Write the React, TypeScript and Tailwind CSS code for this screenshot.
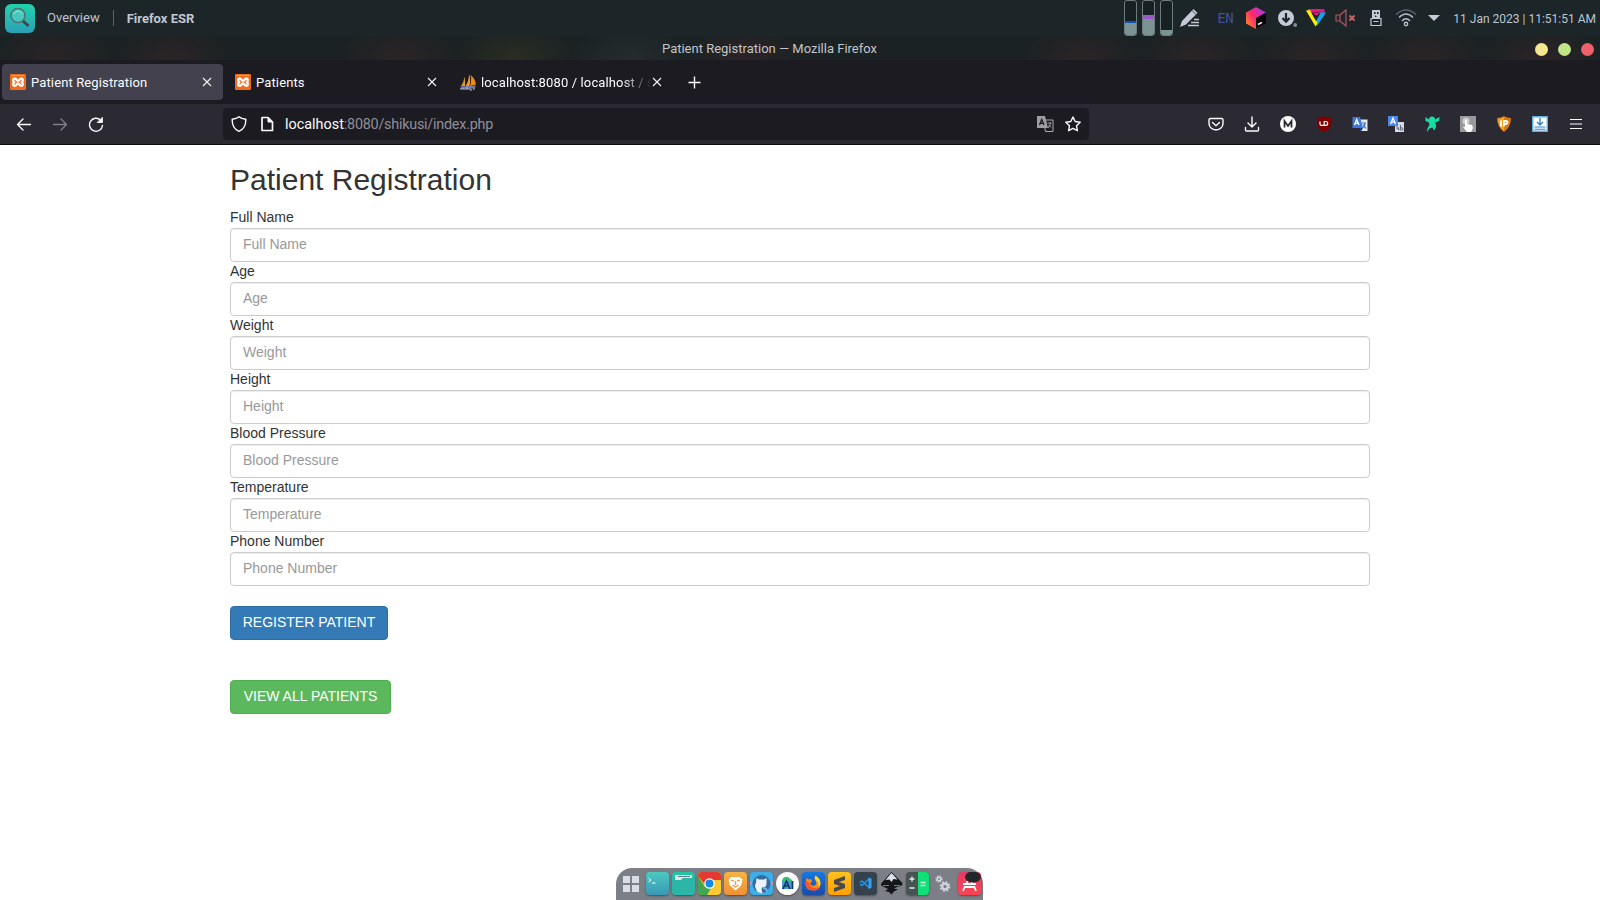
import React from "react";

const Xampp = () => (
  <svg width="16" height="16" viewBox="0 0 16 16" className="shrink-0">
    <rect width="16" height="16" rx="1" fill="#ee6c1c" />
    <path d="M5 4.500C2.700 4.300 2.800 7.300 4.300 8.200C2.800 9 2.700 12 5 11.900C6.500 11.900 6.400 9.500 8 9.500C9.600 9.500 9.500 11.900 11 11.900C13.300 12 13.200 9 11.700 8.200C13.200 7.300 13.300 4.300 11 4.500C9.500 4.500 9.600 6.900 8 6.900C6.400 6.900 6.500 4.500 5 4.500Z" fill="none" stroke="#fff" strokeWidth="2.300" strokeLinejoin="round" />
    <path d="M2 1.500h12" stroke="#ffb37a" strokeWidth=".8" />
  </svg>
);

const Sails = () => (
  <svg width="17" height="17" viewBox="0 0 17 17" className="shrink-0">
    <path d="M4.500 2.500Q4 8 1 12h4Q5.500 7 4.500 2.500Z" fill="#d9963a" />
    <path d="M9 0Q9 7 5.500 12h4Q11 5 9 0Z" fill="#f79a1c" />
    <path d="M10.500 1Q15 4 16 10.500l-6 1.500Q12 6 10.500 1Z" fill="#f08a10" />
    <path d="M0 12.500l16-1-1.500 3H2Z" fill="#777aa8" />
    <path d="M1 16v-2l1.500 1L4 14v2M6 16v-2h2v2M10 14v2h2M14 14v2" stroke="#b9bbd4" fill="none" />
  </svg>
);

const Cross = () => (
  <svg width="10" height="10" viewBox="0 0 10 10" className="shrink-0">
    <path d="M1 1l8 8M9 1l-8 8" stroke="#f4f4f6" strokeWidth="1.100" />
  </svg>
);

const Gauge = ({ children }: { children: React.ReactNode }) => (
  <div className="flex h-[36px] w-[13px] flex-col justify-end overflow-hidden rounded-[3px] border border-[#6e7c7d] bg-[#172022]">{children}</div>
);

const stroke = { fill: "none", stroke: "#fbfbfe", strokeWidth: 1.4, strokeLinecap: "round" as const, strokeLinejoin: "round" as const };

const TopBar = () => (
  <header className="flex h-9 shrink-0 items-center bg-[#1c2528] pl-[5px] pr-1">
    <div className="flex h-[29px] w-[30px] items-center justify-center rounded-[6px] bg-gradient-to-b from-[#20d3aa] to-[#2b9fb5]">
      <svg width="22" height="22" viewBox="0 0 22 22">
        <path d="M14 14l5.500 5" stroke="#39464b" strokeWidth="3" />
        <circle cx="9" cy="8.500" r="7" fill="#45c9bf" stroke="#56706f" strokeWidth="1.600" />
        <path d="M4.500 7Q9 1 13.500 7" fill="none" stroke="#9ce9df" />
      </svg>
    </div>
    <span className="ml-3 text-[13px] text-[#c0c6d2]">Overview</span>
    <div className="ml-[13px] h-4 w-px bg-[#59646a]" />
    <span className="ml-[13px] pt-0.5 text-[13px] font-bold text-[#c0c6d2]">Firefox ESR</span>
    <div className="ml-auto flex items-center">
      <div className="flex gap-[5px]">
        <Gauge><div className="h-0.5 bg-[#0b50b8]" /><div className="h-3 bg-[#7b9393]" /></Gauge>
        <Gauge><div className="h-1 bg-[#9d59cb]" /><div className="h-4 bg-[#7b9393]" /></Gauge>
        <Gauge><div className="h-[5px] bg-[#7b9393]" /></Gauge>
      </div>
      <svg className="ml-[7px]" width="20" height="20" viewBox="0 0 20 20">
        <path d="M0 19l2-6L13.500 1l4 4L6 16.500Z" fill="#c5cad6" />
        <path d="M11 1.500l5.500 5.500" stroke="#1c2528" strokeWidth=".7" />
        <path d="M14 11.500h5M11 14.500h8M8 17.500h11" stroke="#c5cad6" strokeWidth="1.300" />
      </svg>
      <span className="ml-[17px] w-[17px] font-['DejaVu_Sans_Mono'] text-[14px] leading-none tracking-[-0.5px] text-[#42509a]">EN</span>
      <svg className="ml-3" width="20" height="22" viewBox="0 0 20 22">
        <defs>
          <linearGradient id="cube" x1="0" y1=".7" x2="1" y2="0">
            <stop stopColor="#ff7a32" /><stop offset=".4" stopColor="#ff2574" /><stop offset="1" stopColor="#8b45ff" />
          </linearGradient>
        </defs>
        <path d="M10 0l10 5.500v11L10 22 0 16.500v-11Z" fill="url(#cube)" />
        <path d="M10 11l10-5.500v11L10 22Z" fill="#050505" />
        <path d="M12 17.500l4-2.200" stroke="#fff" strokeWidth="1.500" />
      </svg>
      <svg className="ml-3" width="20" height="18" viewBox="0 0 20 18">
        <circle cx="8" cy="9" r="8" fill="#c5cad6" />
        <path d="M8 4v8M4.500 9L8 12.700 11.500 9" stroke="#1c2528" strokeWidth="2.200" fill="none" />
        <circle cx="17.200" cy="16" r="1.900" fill="#7b9393" />
      </svg>
      <svg className="ml-2" width="20" height="18" viewBox="0 0 20 18">
        <path d="M1.500 0H18l1 3.500H4Z" fill="#ee1183" />
        <path d="M20 3.500L11 17 8.500 12 14 3.500Z" fill="#15a5ee" />
        <path d="M0 1.500L9.500 17.500l2-3.500L4 1Z" fill="#fff000" />
        <path d="M5.500 4h9L10 12Z" fill="#1c2528" />
        <path d="M7.500 4h6.500l-2.500 2h-3Z" fill="#ee1183" />
      </svg>
      <svg className="ml-[9px]" width="21" height="18" viewBox="0 0 21 18">
        <path d="M1 6h4v6H1ZM5 6l6-5v16l-6-5" fill="none" stroke="#b35662" strokeWidth="1.200" />
        <path d="M14.500 6.500l5 5M19.500 6.500l-5 5" stroke="#ca6069" strokeWidth="2" />
      </svg>
      <svg className="ml-[14px]" width="12" height="16" viewBox="0 0 12 16">
        <path d="M2 0h8v8H2Z" fill="#c5cad6" />
        <path d="M4 2v2h1.500V2M7 2v2h1.500V2M5 5v2h2" fill="#1c2528" />
        <path d="M1 8.500h10v7H1ZM3.500 11.500h5" fill="none" stroke="#c5cad6" strokeWidth="1.200" />
      </svg>
      <svg className="ml-[13px]" width="22" height="18" viewBox="0 0 22 18" fill="none" strokeWidth="1.400">
        <path d="M1 5.500Q11-3.500 21 5.500" stroke="#59666a" />
        <path d="M4 8.500Q11 1.500 18 8.500M7 12Q11 7.500 15 12" stroke="#b6bdc9" />
        <circle cx="11" cy="15" r="1.700" stroke="#b6bdc9" />
      </svg>
      <svg className="ml-[11px]" width="12" height="6" viewBox="0 0 12 6"><path d="M0 0h12L6 6Z" fill="#c5cad6" /></svg>
      <span className="ml-[13px] whitespace-nowrap pt-0.5 text-[12px] text-[#bec4d0]">11 Jan 2023 | 11:51:51 AM</span>
    </div>
  </header>
);

const TitleBar = () => (
  <div className="flex h-6 shrink-0 items-center bg-[#1b2224] bg-[radial-gradient(ellipse_60px_36px_at_55px_22px,#2b2326,transparent),radial-gradient(ellipse_60px_36px_at_172px_22px,#2b2326,transparent),radial-gradient(ellipse_60px_36px_at_400px_22px,#2b2326,transparent),radial-gradient(ellipse_60px_36px_at_515px_22px,#2a2d23,transparent),radial-gradient(ellipse_60px_36px_at_630px_22px,#242c2d,transparent),radial-gradient(ellipse_60px_36px_at_745px_22px,#2b2326,transparent),radial-gradient(ellipse_60px_36px_at_1082px_22px,#2b2326,transparent),radial-gradient(ellipse_60px_36px_at_1197px_22px,#2b2326,transparent),radial-gradient(ellipse_60px_36px_at_1312px_22px,#2b2326,transparent),radial-gradient(ellipse_60px_36px_at_1425px_22px,#2b2326,transparent),radial-gradient(ellipse_60px_36px_at_1540px_22px,#2b2326,transparent)] pl-[662px] pr-[6px]">
    <span className="pt-0.5 text-[13px] text-[#c3c5c8]">Patient Registration — Mozilla Firefox</span>
    <div className="ml-auto flex gap-[10px] pt-0.5">
      <i className="size-[13px] rounded-full bg-[#f4e790]" />
      <i className="size-[13px] rounded-full bg-[#c1e686]" />
      <i className="size-[13px] rounded-full bg-[#ed616b]" />
    </div>
  </div>
);

const Tabs = () => (
  <nav className="flex h-11 shrink-0 items-center bg-[#1c1b22] pl-0.5 text-[13px] tracking-[0.13px] text-[#fbfbfe]">
    <div className="flex h-9 w-[221px] items-center rounded-[4px] bg-[#42414d] pl-2 pr-[11px]">
      <Xampp /><span className="ml-[5px] flex-1 pt-0.5">Patient Registration</span><Cross />
    </div>
    <div className="ml-1 flex h-9 w-[221px] items-center pl-2 pr-[11px]">
      <Xampp /><span className="ml-[5px] flex-1 pt-0.5">Patients</span><Cross />
    </div>
    <div className="ml-1 flex h-9 w-[221px] items-center pl-2 pr-[11px]">
      <Sails />
      <span className="ml-1 w-[171px] whitespace-nowrap pt-0.5 [mask-image:linear-gradient(to_right,black_140px,transparent_171px)]">localhost:8080 / localhost / s</span>
      <Cross />
    </div>
    <svg className="ml-[15px]" width="13" height="13" viewBox="0 0 13 13"><path d="M6.500 .5v12M.5 6.500h12" stroke="#fbfbfe" strokeWidth="1.400" /></svg>
  </nav>
);

const Toolbar = () => (
  <div className="flex h-[41px] shrink-0 items-center border-b border-[#0c0c0d] bg-[#2b2a33] pl-4 pr-[17px]">
    <svg width="16" height="16" viewBox="0 0 16 16" {...stroke}><path d="M14.500 8.500H1.500M7 3L1.500 8.500 7 14" /></svg>
    <svg className="ml-5 opacity-40" width="16" height="16" viewBox="0 0 16 16" {...stroke}><path d="M1.500 8.500h13M9 3l5.500 5.500L9 14" /></svg>
    <svg className="ml-5" width="16" height="16" viewBox="0 0 16 16" {...stroke}><path d="M14.500 9.500A6.500 6.500 0 1 1 12.500 4" /><path d="M14.500 1.500v5h-5Z" fill="#fbfbfe" strokeWidth=".8" /></svg>
    <div className="ml-[119px] flex h-8 w-[866px] items-center rounded-[4px] bg-[#1c1b22] pl-2 pr-2">
      <svg width="16" height="16" viewBox="0 0 16 16" {...stroke}><path d="M8 .8C6 2.500 3.500 3 1.200 3.300C1 9.500 3.500 13.500 8 15.300C12.500 13.500 15 9.500 14.800 3.300C12.500 3 10 2.500 8 .8Z" /></svg>
      <svg className="ml-3" width="16" height="16" viewBox="0 0 16 16" {...stroke} strokeWidth="1.700"><path d="M3 1.500h6l4.500 4.500v8.500H3Z" /><path d="M9 1.500v4.500h4.500Z" fill="#fbfbfe" strokeWidth="1" /></svg>
      <span className="ml-[10px] flex-1 pt-0.5 text-[14.400px] tracking-[-0.250px] text-[#8f8f98]"><span className="tracking-normal text-[#fbfbfe]">localhost</span>:8080/shikusi/index.php</span>
      <svg width="17" height="16" viewBox="0 0 17 16">
        <path d="M6.500 4h9.500v11.500H8.500Z" fill="none" stroke="#aaaab0" />
        <path d="M0 0h8l3 12H0Z" fill="#9d9da5" />
        <path d="M2.500 9L4.700 3.500 7 9M3.200 7.300h3.200" fill="none" stroke="#1c1b22" strokeWidth="1.300" />
        <path d="M10.500 7h4M13.500 7q0 3-2.500 5M11.500 9l2.500 2.500" fill="none" stroke="#aaaab0" />
      </svg>
      <svg className="ml-[11px]" width="16" height="16" viewBox="0 0 16 16" {...stroke}><path d="M8 1l2.200 4.500 5 .7-3.700 3.500.9 5L8 12.300 3.600 14.700l.9-5L.8 6.200l5-.7Z" /></svg>
    </div>
    <div className="ml-auto flex items-center gap-5">
      <svg width="16" height="16" viewBox="0 0 16 16" {...stroke}><path d="M2.500 2.500h11q1.500 0 1.500 1.500v3.500a7 6.500 0 0 1-14 0V4q0-1.500 1.500-1.500ZM4.500 6.500L8 9.800l3.500-3.300" /></svg>
      <svg width="16" height="16" viewBox="0 0 16 16" {...stroke}><path d="M8 1v10M4 7l4 4 4-4M1.500 11.500v2.500q0 1 1 1h11q1 0 1-1v-2.500" /></svg>
      <svg width="16" height="16" viewBox="0 0 16 16"><circle cx="8" cy="8" r="8" fill="#fff" /><path d="M4.500 11.500V5L8 10l3.500-5v6.500" fill="none" stroke="#2b2a33" strokeWidth="1.800" /></svg>
      <svg width="16" height="16" viewBox="0 0 16 16"><path d="M8 0Q11 2 15 2v6q0 5-7 8Q1 13 1 8V2Q5 2 8 0Z" fill="#800000" /><path d="M4 5.500v2.500q0 1.300 1.500 1.300H8.200V5.500h1.300q2.200 0 2.200 1.900t-2.200 1.900H8" fill="none" stroke="#fff" strokeWidth="1.200" /></svg>
      <svg width="16" height="16" viewBox="0 0 16 16"><path d="M7 3.500h8.500V15H9Z" fill="#e4e7ed" /><path d="M.5 1h7.500l3 11H.5Z" fill="#3b77df" /><path d="M7.500 12H11l-2 3.500Z" fill="#1c3f96" /><path d="M2.500 9l2.200-5.500L7 9M3.200 7.300h3" fill="none" stroke="#fff" strokeWidth="1.300" /><path d="M10 7h4M13 6.500q0 4-2.500 5.500M11 8.500l3 4" fill="none" stroke="#4c72b7" strokeWidth="1.200" /></svg>
      <svg width="16" height="16" viewBox="0 0 16 16"><rect x="7" y="6" width="9" height="10" fill="#d5dce4" /><path d="M0 0h10v10H0Z" fill="#4888f0" /><path d="M2.500 8L5 2l2.500 6M3 6.200h4" fill="none" stroke="#fff" strokeWidth="1.300" /><path d="M8 11q3-1 2.500 3M8.500 13q2-1.500 3 .5M12.500 9v5q2.500 1 2.500-1t-2.500-1" fill="none" stroke="#607084" /></svg>
      <svg width="16" height="16" viewBox="0 0 16 16"><path d="M1.500 1L5 3.500Q5 .5 8 .5t3 3L15.500 1 15 5l-4 1.500Q12.500 9 12 11l-2 3.500-1.500-3-3 1L3 16Q3 11 5.500 9.500L5 6.500 1.500 5Z" fill="#13dfa4" /></svg>
      <svg width="16" height="16" viewBox="0 0 16 16"><rect width="16" height="16" fill="#999" /><circle cx="6" cy="5" r="3.500" fill="#ccc" /><path d="M5 4q1.500-1 2 0v4l5 1 1 3-2 4H7l-4-5q1-1 2 0Z" fill="#fff" /></svg>
      <svg width="16" height="16" viewBox="0 0 16 16"><path d="M8 0q3 2 7 2 0 9-7 14Q1 11 1 2q4 0 7-2Z" fill="#d87910" /><path d="M8 1Q5 3 2 3q0 8 6 12Z" fill="#f3a425" /><path d="M5 4.500v6M8 10.500v-5.500h1.500q2 0 2 1.500T9.500 8H8" fill="none" stroke="#fff" strokeWidth="1.800" /></svg>
      <svg width="16" height="16" viewBox="0 0 16 16"><path d="M.7 .7h14.600v14.600H.7Z" fill="#fff" stroke="#5caee8" strokeWidth="1.400" /><path d="M8 2v6M5 6l3 3 3-3" fill="none" stroke="#3484bd" strokeWidth="1.400" /><path d="M2.500 11h11M2.500 13.200h11" stroke="#3484bd" /></svg>
      <svg className="ml-px" width="14" height="12" viewBox="0 0 14 12"><path d="M1 1.500h12M1 6h12M1 10.500h12" stroke="#fbfbfe" strokeWidth="1.200" /></svg>
    </div>
  </div>
);

const fields = ["Full Name", "Age", "Weight", "Height", "Blood Pressure", "Temperature", "Phone Number"];

const Page = () => (
  <main className="min-h-0 w-[1140px] flex-1 self-center pt-[18px] font-['Liberation_Sans',sans-serif] text-[14px] leading-5 text-[#333]">
    <h2 className="mb-3 text-[30px] leading-[33px]">Patient Registration</h2>
    {fields.map((name) => (
      <label key={name} className="block">
        <span className="block h-5 leading-[18px]">{name}</span>
        <input placeholder={name} className="block h-[34px] w-full rounded-[4px] border border-[#ccc] px-3 pb-[8px] pt-[6px] shadow-[inset_0_1px_1px_rgba(0,0,0,0.075)] outline-none placeholder:text-[#999]" />
      </label>
    ))}
    <div className="mt-5 flex flex-col items-start gap-10 text-white">
      <button className="h-[34px] w-[158px] whitespace-nowrap rounded-[4px] border border-[#2e6da4] bg-[#337ab7] pb-0.5">REGISTER PATIENT</button>
      <button className="h-[34px] w-[161px] whitespace-nowrap rounded-[4px] border border-[#4cae4c] bg-[#5cb85c] pb-0.5">VIEW ALL PATIENTS</button>
    </div>
  </main>
);

const Tile = ({ className, children }: { className: string; children?: React.ReactNode }) => (
  <div className={`flex size-[23px] shrink-0 items-center justify-center overflow-hidden shadow-[0_1px_2px_rgba(0,0,0,0.4)] ${className}`}>
    <svg width="23" height="23" viewBox="0 0 23 23">{children}</svg>
  </div>
);

const Dock = () => (
  <footer className="mr-0.5 flex h-8 w-[367px] shrink-0 items-center gap-[3px] self-center rounded-t-[16px] bg-[#7c7f86] pb-px pl-[4px]">
    <div className="flex size-[23px] items-center justify-center">
      <svg width="16" height="16" viewBox="0 0 16 16"><path d="M0 0h7v7H0ZM9 0h7v7H9ZM0 9h7v7H0ZM9 9h7v7H9Z" fill="#d9dee6" /></svg>
    </div>
    <Tile className="rounded-[4px] bg-gradient-to-b from-[#4ccac1] to-[#3997b4]"><path d="M2.500 6l2.500 2-2.500 2M6 11h3.500" fill="none" stroke="#fff" /></Tile>
    <Tile className="rounded-[4px] bg-gradient-to-b from-[#25c4a7] to-[#2da8a4]"><path d="M3 3h17v4H10l-1 2H3Z" fill="#dce8e6" /><path d="M6 4.500h12" stroke="#68817e" /><path d="M0 8h9l2-2h12v17H0Z" fill="#2cb6a8" /></Tile>
    <Tile className="rounded-[4px] bg-[#fcc934]"><path d="M0 0h23v8H11.500L8 14 0 4Z" fill="#e33b32" /><path d="M0 4l7 11 6 1-4 7H0Z" fill="#40a652" /><circle cx="11.500" cy="11.500" r="5.300" fill="#fff" /><circle cx="11.500" cy="11.500" r="4" fill="#148bea" /></Tile>
    <Tile className="rounded-[4px] bg-gradient-to-b from-[#f6b343] to-[#ef9136]"><path d="M7.500 5h8l3 2.500-1.500 6-5.500 5-5.500-5-1.500-6Z" fill="#fff" /><path d="M7 8l3 1.200M16 8l-3 1.200M11.500 9v4M8.500 13l3 2 3-2" fill="none" stroke="#ef9b38" strokeWidth="1.300" /></Tile>
    <Tile className="rounded-[4px] bg-[#3caeea]"><circle cx="11.500" cy="12" r="9" fill="#376b9d" /><path d="M6.500 6l2.500 1.500h5L16.500 6v5q.5 4-4.500 4.500-1 3 1 6Q6 21 6 16.500 4 14 6 11Z" fill="#e8f3fb" /><path d="M13 16q4 0 4 4" fill="none" stroke="#6eb2df" strokeWidth="2" /><path d="M0 11h2M21 11h2" stroke="#e08a9c" strokeWidth="3" /></Tile>
    <Tile className="rounded-full bg-white"><path d="M6 9q1-5 6-4l4 3v2H6Z" fill="#38c17a" /><path d="M6 9h10v8H6Z" fill="#4a98df" /><path d="M7 17l3.500-8 3.500 8M8 14h5M16.500 9v8" fill="none" stroke="#153a56" strokeWidth="1.700" /></Tile>
    <Tile className="rounded-[4px] bg-gradient-to-b from-[#1478e6] to-[#1b4ba8]"><path d="M4.500 6l2 1.500 2.500-.5 1 2.500-2 2q1.500 3 4.500 2t1-5q-2-2 0-5 5 3 5 8.500-1 6.500-7 6.500-8 0-8-7.500Z" fill="#ff8a1c" /><path d="M4 9q-1 9 7.500 9.500 4 0 6-3-4 1.500-7 0Q6 13 7 10.500Z" fill="#f9502c" /><path d="M13.500 3.500q5 3 5 8-.5 3-2 4 .5-4-2-6.500t-1-5.500Z" fill="#ffd62b" /></Tile>
    <Tile className="rounded-[4px] bg-gradient-to-b from-[#ffc31a] to-[#ffa000]"><path d="M17 4v4l-6 2 6 2v4L6 20v-4l6-2-6-2V8Z" fill="#49494b" /></Tile>
    <Tile className="rounded-[4px] bg-[#35414d]"><path d="M15.500 6.500L8 13.500 6 12M15.500 16L8 9 6 10.500" fill="none" stroke="#2495e4" strokeWidth="1.500" /><path d="M14.500 5.500l3 1v9.500l-3 1Z" fill="#31a3f4" /></Tile>
    <svg width="23" height="23" viewBox="0 0 23 23" className="shrink-0"><path d="M11.500 0L22 10.500q2 3-4 4l-4 2 4 1-4 2-2.500 3L9 20l-4-1 3-2-6-3q-2-1 0-3.500Z" fill="#15161a" /><path d="M11.500 1l6 6.500-4-.5-2 3-2-2.500-4 .5Z" fill="#dce1ea" /><path d="M3 13.500h6M14 13.500h6" stroke="#747b83" /></svg>
    <Tile className="rounded-[4px] bg-[#4a5354]"><path d="M12 0h11v23H12Z" fill="#0ee276" /><path d="M3.500 7h5M6 4.500v5M3.500 16h5M14.500 10.500h5M14.500 13.500h5" stroke="#d9f4e8" strokeWidth="1.300" /></Tile>
    <svg width="23" height="23" viewBox="0 0 23 23" className="shrink-0" fill="none" stroke="#d0d5de"><circle cx="7" cy="7" r="1.800" strokeWidth="1.600" /><circle cx="7" cy="7" r="3" strokeWidth="1.300" strokeDasharray="1.200 1.150" /><circle cx="13" cy="14.500" r="2.800" strokeWidth="2.200" /><circle cx="13" cy="14.500" r="4.600" strokeWidth="1.600" strokeDasharray="1.900 1.700" /></svg>
    <Tile className="rounded-[4px] bg-gradient-to-b from-[#e23c66] to-[#ff4450]"><path d="M5 12h13M7 14l-2 5M16 14l2 5M8 12l2-3M15 12l-2-3M7 15h9" fill="none" stroke="#fff" strokeWidth="1.800" /><ellipse cx="15" cy="5" rx="8" ry="5.500" fill="#20282c" /></Tile>
  </footer>
);

export default function App() {
  return (
    <div className="flex h-screen w-full flex-col overflow-hidden bg-white font-[Roboto,sans-serif]">
      <TopBar />
      <TitleBar />
      <Tabs />
      <Toolbar />
      <Page />
      <Dock />
    </div>
  );
}
